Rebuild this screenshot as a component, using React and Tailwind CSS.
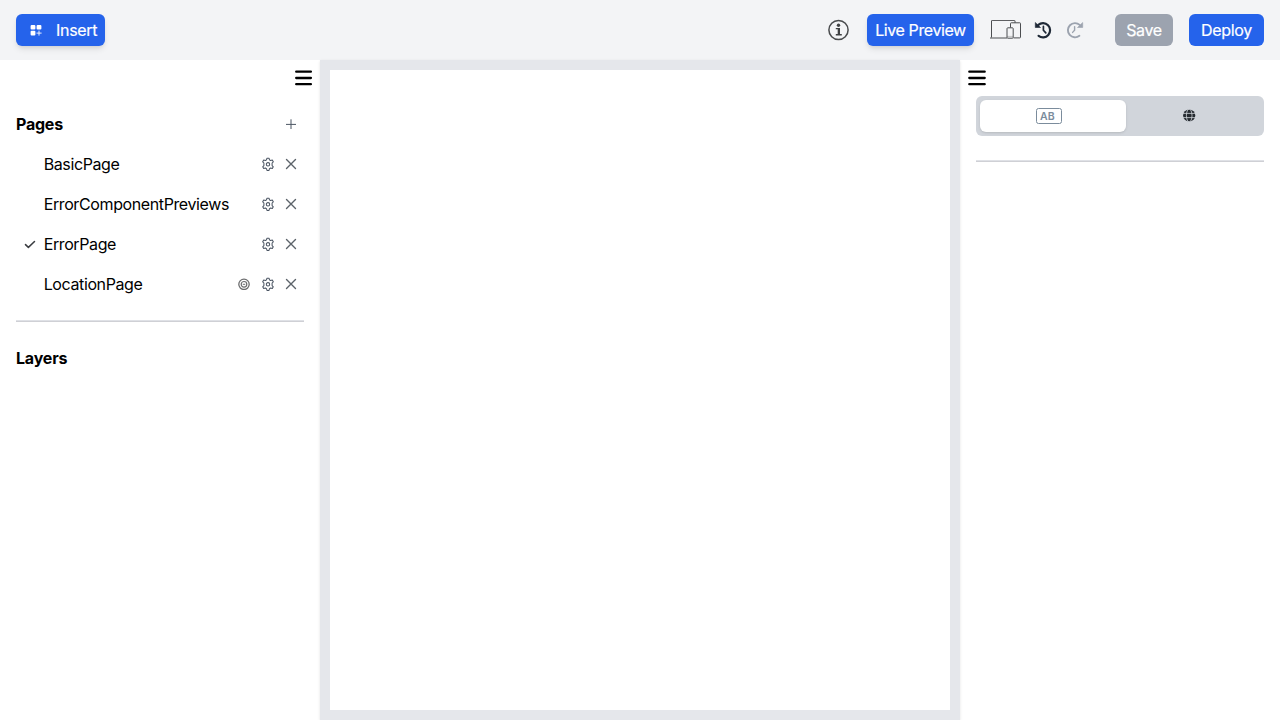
import React from "react";

function InsertIcon() {
  return (
    <svg width="12" height="12" viewBox="0 0 12 12" fill="white">
      <rect x="0.6" y="0.9" width="4.8" height="4.6" rx="1" />
      <rect x="6.6" y="0.9" width="4.8" height="4.6" rx="1" />
      <rect x="0.6" y="6.8" width="4.8" height="4.6" rx="1" />
      <path d="M9 6.6v5M6.5 9.1h5.1" stroke="white" strokeWidth="0.9" />
    </svg>
  );
}

function InfoIcon() {
  return (
    <svg width="22" height="22" viewBox="0 0 22 22" fill="none">
      <circle cx="11.5" cy="11" r="9.6" stroke="#494b4d" strokeWidth="1.5" />
      <circle cx="11.5" cy="6.2" r="1.7" fill="#3f4143" />
      <path d="M8.8 8.9h4.2v6.2h1.8v1.5h-6v-1.5h1.9v-4.8H8.8z" fill="#3f4143" />
    </svg>
  );
}

function DevicesIcon() {
  return (
    <svg width="32" height="20" viewBox="-1 0 32 20" fill="none" stroke="#4b4d50" strokeWidth="1">
      <path d="M1.5 17.5V1q0-.6.6-.6h22.2q.7 0 .7.6v1.8M0 18h17" />
      <path d="M20.5 7.5V3.5q0-.7.7-.7h8.6q.7 0 .7.7v13.7q0 .7-.7.7H23.5" />
      <rect x="17" y="7.8" width="6.2" height="10.4" rx="0.8" />
      <path d="M17 16.4h6" strokeOpacity=".3" />
    </svg>
  );
}

function HistoryIcon({ color, flipped, thin }) {
  return (
    <svg width="18" height="18" viewBox="0 0 18 18" fill="none" stroke={color} className={flipped ? "-scale-x-100" : ""}>
      <path d="M4.3 3.9A7.1 7.1 0 1 1 4.6 14.8" strokeWidth={thin ? 1.9 : 2.2} strokeLinecap="round" />
      <path d="M1.3 1.5v5h5.2z" fill={color} strokeWidth=".6" strokeLinejoin="round" />
      <path d={thin ? "M9.4 5.6v3.6l2 2.2" : "M9.4 5.4v3.8l2.4 2.7"} strokeWidth={thin ? 1.4 : 1.7} strokeLinecap="round" />
    </svg>
  );
}

function MenuIcon({ inset }) {
  return (
    <svg width="18" height="16" viewBox="0 0 18 16" stroke="black" strokeWidth="2.3" strokeLinecap="round">
      <path d={inset ? "M1.2 1.7h14.7M1.2 8h14.7M1.2 14.2h14.7" : "M1.3 1.7h15.4M1.3 8h15.4M1.3 14.2h15.4"} />
    </svg>
  );
}

function PlusIcon() {
  return (
    <svg width="10" height="10" viewBox="0 0 10 10" stroke="#4b5563" strokeWidth="1">
      <path d="M5 .3v9.7M0 5.4h10" />
    </svg>
  );
}

function CloseIcon() {
  return (
    <svg width="12" height="12" viewBox="0 0 12 12" stroke="#5b6269" strokeWidth="1.4" strokeLinecap="round">
      <path d="M1.5 1.5l9 9M10.5 1.5l-9 9" />
    </svg>
  );
}

function GearIcon() {
  return (
    <svg width="14" height="14" viewBox="0 0 14 14" fill="none" stroke="#4b5563" strokeWidth="1.05" strokeLinejoin="round">
      <path d="M5.5 2.9L6 1.2h2l.5 1.7 1.1.65 1.7-.45 1 1.7L11.1 6v2.6l1.2 1.2-1 1.7-1.7-.45-1.1.65L8 13.4H6l-.5-1.7-1.1-.65-1.7.45-1-1.7L2.9 8.6V6L1.7 4.8l1-1.7 1.7.45z" />
      <circle cx="7" cy="7.3" r="1.7" />
    </svg>
  );
}

function TargetIcon() {
  return (
    <svg width="12" height="12" viewBox="0 0 12 12" fill="none" stroke="#6b6c6e">
      <circle cx="6" cy="6.3" r="5.2" strokeWidth="1.3" />
      <circle cx="6" cy="6.3" r="2.8" strokeWidth="1.2" />
      <path d="M4.8 6.3h2.4" strokeWidth="1" />
    </svg>
  );
}

function CheckIcon() {
  return (
    <svg width="12" height="10" viewBox="0 0 12 10" fill="none" stroke="#3a3d41" strokeWidth="1.5" strokeLinecap="round" strokeLinejoin="round">
      <path d="M1.5 5.6l2.9 2.8 6.1-5.9" />
    </svg>
  );
}

function GlobeIcon() {
  return (
    <svg width="13" height="13" viewBox="0 0 13 13" fill="none" stroke="#d1d5db" strokeWidth=".8">
      <circle cx="6.2" cy="6.5" r="6.1" fill="#262b31" stroke="none" />
      <ellipse cx="6.2" cy="6.5" rx="2.8" ry="6.4" />
      <path d="M0 4.4h13M0 8.6h13" />
    </svg>
  );
}

const pages = [
  { name: "BasicPage" },
  { name: "ErrorComponentPreviews" },
  { name: "ErrorPage", active: true },
  { name: "LocationPage", target: true },
];

function PageRow({ page }) {
  return (
    <li className="flex h-10 items-center">
      <span className="flex w-7 shrink-0 justify-center">{page.active && <CheckIcon />}</span>
      <span className="-ml-px flex-1 pl-[0.7px] tracking-[-0.39px] whitespace-nowrap">{page.name}</span>
      <span className="flex items-center pr-[7px]">
        {page.target && <span className="mr-[11px]"><TargetIcon /></span>}
        <GearIcon />
        <span className="ml-[10px]"><CloseIcon /></span>
      </span>
    </li>
  );
}

function Divider({ className }) {
  return <hr className={`h-0.5 border-t border-b border-t-[#dfe1e6] border-b-[#cfd0d5] ${className}`} />;
}

export default function App() {
  return (
    <div className="flex h-screen w-full flex-col overflow-hidden bg-white font-['Inter',sans-serif] text-base text-black">
      <header className="flex h-[60px] shrink-0 items-center justify-between bg-[#f3f4f6] px-4 text-white">
        <button className="flex h-8 w-[89px] items-center rounded-md bg-[#2563eb] pl-[14px] shadow-md">
          <InsertIcon />
          <span className="ml-[14px] tracking-[-0.3px] [-webkit-text-stroke:0.2px]">Insert</span>
        </button>
        <div className="flex items-center [-webkit-text-stroke:0.2px]">
          <InfoIcon />
          <button className="ml-[18px] flex h-8 w-[107px] items-center justify-center rounded-md bg-[#2563eb] tracking-[-0.4px] whitespace-nowrap shadow-md">Live Preview</button>
          <span className="ml-[15px]"><DevicesIcon /></span>
          <span className="ml-[13px]"><HistoryIcon color="#1f2937" /></span>
          <span className="ml-[14px]"><HistoryIcon color="#9ca3af" flipped thin /></span>
          <button className="ml-[31px] flex h-8 w-[58px] items-center justify-center rounded-md bg-[#9ca3af] tracking-[-0.38px]">Save</button>
          <button className="ml-4 flex h-8 w-[75px] items-center justify-center rounded-md bg-[#2563eb] tracking-[-0.3px]">Deploy</button>
        </div>
      </header>
      <div className="flex min-h-0 flex-1">
        <aside className="w-80 shrink-0 bg-white px-4">
          <div className="-mr-[9px] flex h-9 items-center justify-end"><MenuIcon inset /></div>
          <section className="pt-2">
            <div className="flex h-10 items-center justify-between pr-2">
              <h2 className="font-bold tracking-[-0.24px]">Pages</h2>
              <PlusIcon />
            </div>
            <ul>{pages.map((page) => <PageRow key={page.name} page={page} />)}</ul>
          </section>
          <Divider className="mt-4" />
          <h2 className="mt-6 font-bold tracking-[-0.2px]">Layers</h2>
        </aside>
        <main className="relative flex-1 bg-[#e5e7eb] p-[10px] shadow-sm">
          <div className="h-full bg-white" />
        </main>
        <aside className="w-80 shrink-0 bg-white px-4">
          <div className="-ml-2 flex h-9 items-center"><MenuIcon /></div>
          <div className="flex h-10 rounded-md bg-[#d1d5db] p-1">
            <div className="flex w-[146px] items-center justify-center rounded-md bg-white pr-2 shadow">
              <span className="flex h-4 w-[26px] items-center rounded-[2.5px] border border-[#7b8c9c] pt-[2px] pl-[3px] text-[10.5px] leading-none font-semibold text-[#7b8c9c]">AB</span>
            </div>
            <div className="flex flex-1 items-center justify-center pr-2 pb-px"><GlobeIcon /></div>
          </div>
          <Divider className="mt-6" />
        </aside>
      </div>
    </div>
  );
}
